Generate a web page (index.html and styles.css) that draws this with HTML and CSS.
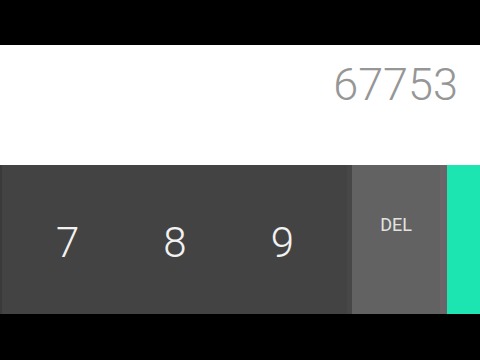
FILE: index.html
```html
<!DOCTYPE html>
<html>
<head>
<meta charset="utf-8">
<link rel="stylesheet" href="styles.css">
</head>
<body>
<div class="screen">
  <div class="bar-top"></div>
  <div class="display"><span class="result">67753</span></div>
  <div class="keypad">
    <div class="digits">
      <div class="key">7</div>
      <div class="key">8</div>
      <div class="key">9</div>
    </div>
    <div class="ops"><span class="del">DEL</span></div>
    <div class="adv"></div>
  </div>
  <div class="bar-bottom"></div>
</div>
</body>
</html>
```
FILE: styles.css
```css
html, body {
  margin: 0;
  padding: 0;
  background: #000;
}
.screen {
  width: 480px;
  height: 360px;
  display: flex;
  flex-direction: column;
  font-family: Roboto, "Liberation Sans", sans-serif;
}
.bar-top {
  height: 45px;
  background: #000;
}
.display {
  height: 120px;
  background: #fff;
  display: flex;
  justify-content: flex-end;
  align-items: flex-start;
  padding-right: 22px;
  box-sizing: border-box;
}
.result {
  font-size: 45px;
  font-weight: 300;
  color: #969696;
  line-height: 1;
  margin-top: 17px;
}
.keypad {
  height: 149px;
  display: flex;
}
.digits {
  width: 352px;
  box-sizing: border-box;
  background: #434343;
  border-left: 2px solid #3a3a3a;
  border-right: 5px solid #474747;
  display: flex;
  padding-left: 12px;
  padding-right: 11px;
}
.key {
  flex: 1;
  display: flex;
  align-items: center;
  justify-content: center;
  color: #f2f2f2;
  font-size: 42px;
  font-weight: 300;
  padding-top: 6px;
}
.ops {
  width: 95px;
  box-sizing: border-box;
  background: #626262;
  border-right: 7px solid #6a6367;
  display: flex;
  justify-content: center;
  padding-top: 50px;
}
.del {
  color: #e2e2e2;
  font-size: 18px;
  line-height: 20px;
}
.adv {
  flex: 1;
  background: #1de5b2;
}
.bar-bottom {
  flex: 1;
  background: #000;
}
```
